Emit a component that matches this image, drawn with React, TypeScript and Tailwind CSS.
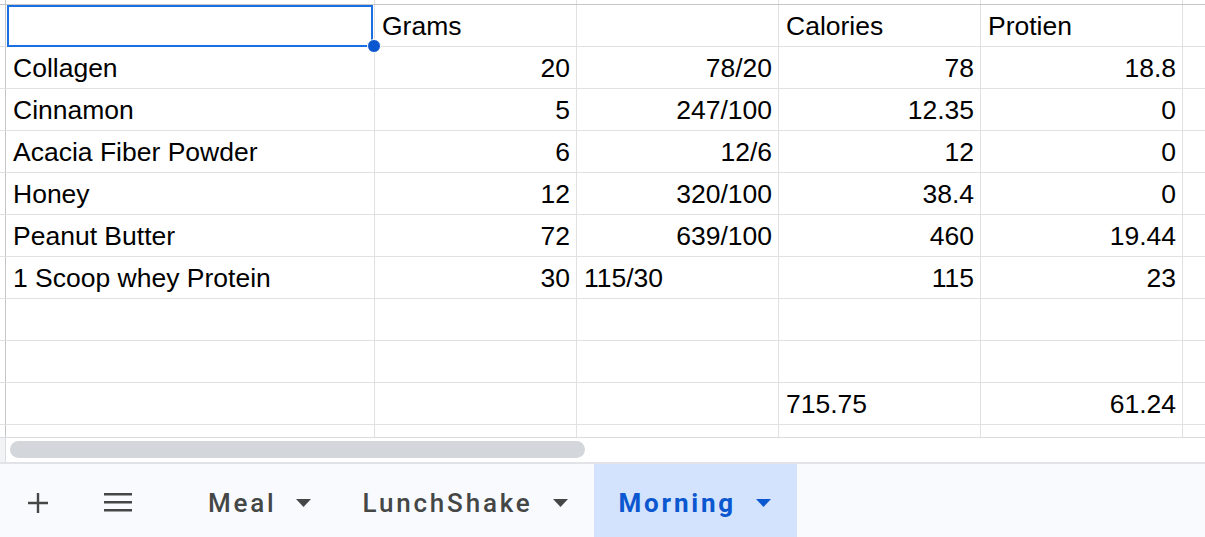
import React from 'react';

type Cell = { v: string; right?: boolean };

const ROWS: Cell[][] = [
  [{ v: '' }, { v: 'Grams' }, { v: '' }, { v: 'Calories' }, { v: 'Protien' }],
  [{ v: 'Collagen' }, { v: '20', right: true }, { v: '78/20', right: true }, { v: '78', right: true }, { v: '18.8', right: true }],
  [{ v: 'Cinnamon' }, { v: '5', right: true }, { v: '247/100', right: true }, { v: '12.35', right: true }, { v: '0', right: true }],
  [{ v: 'Acacia Fiber Powder' }, { v: '6', right: true }, { v: '12/6', right: true }, { v: '12', right: true }, { v: '0', right: true }],
  [{ v: 'Honey' }, { v: '12', right: true }, { v: '320/100', right: true }, { v: '38.4', right: true }, { v: '0', right: true }],
  [{ v: 'Peanut Butter' }, { v: '72', right: true }, { v: '639/100', right: true }, { v: '460', right: true }, { v: '19.44', right: true }],
  [{ v: '1 Scoop whey Protein' }, { v: '30', right: true }, { v: '115/30' }, { v: '115', right: true }, { v: '23', right: true }],
  [{ v: '' }, { v: '' }, { v: '' }, { v: '' }, { v: '' }],
  [{ v: '' }, { v: '' }, { v: '' }, { v: '' }, { v: '' }],
  [{ v: '' }, { v: '' }, { v: '' }, { v: '715.75' }, { v: '61.24', right: true }],
  [{ v: '' }, { v: '' }, { v: '' }, { v: '' }, { v: '' }],
];

const WIDTHS = ['w-[369px]', 'w-[202px]', 'w-[202px]', 'w-[202px]', 'w-[202px]'];

function Caret({ active }: { active?: boolean }) {
  return (
    <svg width="15" height="8" viewBox="0 0 15 8" className="shrink-0">
      <path d="M0 0h15L7.5 8z" fill={active ? '#0b57d0' : '#444746'} />
    </svg>
  );
}

export default function App() {
  return (
    <div className="w-[1205px] h-[537px] bg-white overflow-hidden font-['Liberation_Sans',Arial,sans-serif] text-[26.5px] text-black">
      {/* grid */}
      <div className="h-[437px] overflow-hidden">
        <div className="flex h-[5px] border-b border-[#c4c7c5]">
          <div className="w-[6px] shrink-0 border-r border-[#c4c7c5]" />
          {WIDTHS.map((w, i) => (
            <div key={i} className={`${w} shrink-0 border-r border-[#e1e1e1]`} />
          ))}
        </div>
        {ROWS.map((row, r) => (
          <div key={r} className="flex h-[42px] border-b border-[#e1e1e1]">
            <div className="w-[6px] shrink-0 border-r border-[#c4c7c5] bg-white" />
            {row.map((c, i) => (
              <div
                key={i}
                className={`${WIDTHS[i]} shrink-0 border-r border-[#e1e1e1] px-[7px] pt-[1px] leading-[41px] whitespace-nowrap relative ${
                  c.right ? 'text-right pr-[6px]' : 'text-left'
                } ${r === 0 && i === 0 ? 'z-10' : ''}`}
              >
                {c.v}
                {r === 0 && i === 0 && (
                  <>
                    <div className="absolute left-[1px] top-0 right-[1px] -bottom-px border-2 border-[#1a6fe3]" />
                    <div className="absolute -right-[7px] -bottom-[7px] w-[14px] h-[14px] rounded-full bg-[#0b57d0] border-[1.5px] border-white" />
                  </>
                )}
              </div>
            ))}
          </div>
        ))}
      </div>

      {/* horizontal scrollbar */}
      <div className="flex h-[25px] border-t border-[#dadce0]">
        <div className="w-[6px] shrink-0 bg-[#f1f3f4] border-r border-[#dadce0]" />
        <div className="flex-1 pt-[3px] pl-[4px]">
          <div className="w-[575px] h-[17px] rounded-full bg-[#d3d6da]" />
        </div>
      </div>

      {/* sheet tabs */}
      <div className="flex items-stretch h-[75px] border-t-2 border-[#e1e3e6] bg-[#f8fafd] font-['Roboto',sans-serif] text-[26px] font-medium tracking-[2.8px] text-[#444746]">
        <div className="w-[76px] flex items-center justify-center pt-[4px]">
          <svg width="20" height="20" viewBox="0 0 20 20">
            <path d="M8.8 0h2.4v20H8.8zM0 8.8h20v2.4H0z" fill="#444746" />
          </svg>
        </div>
        <div className="w-[84px] flex items-center justify-center pt-[4px]">
          <svg width="28" height="19" viewBox="0 0 28 19">
            <path d="M0 0h28v2.6H0zM0 8h28v2.6H0zM0 16h28v2.6H0z" fill="#444746" />
          </svg>
        </div>
        <div className="flex items-center gap-[19px] pl-[48px] pr-[26px] pt-[5px]">
          <span>Meal</span>
          <Caret />
        </div>
        <div className="flex items-center gap-[20px] pl-[26px] pr-[26px] pt-[5px]">
          <span>LunchShake</span>
          <Caret />
        </div>
        <div className="flex items-center gap-[20px] pl-[25px] pr-[26px] pt-[5px] bg-[#d3e3fd] text-[#0b57d0] font-bold">
          <span>Morning</span>
          <Caret active />
        </div>
      </div>
    </div>
  );
}
